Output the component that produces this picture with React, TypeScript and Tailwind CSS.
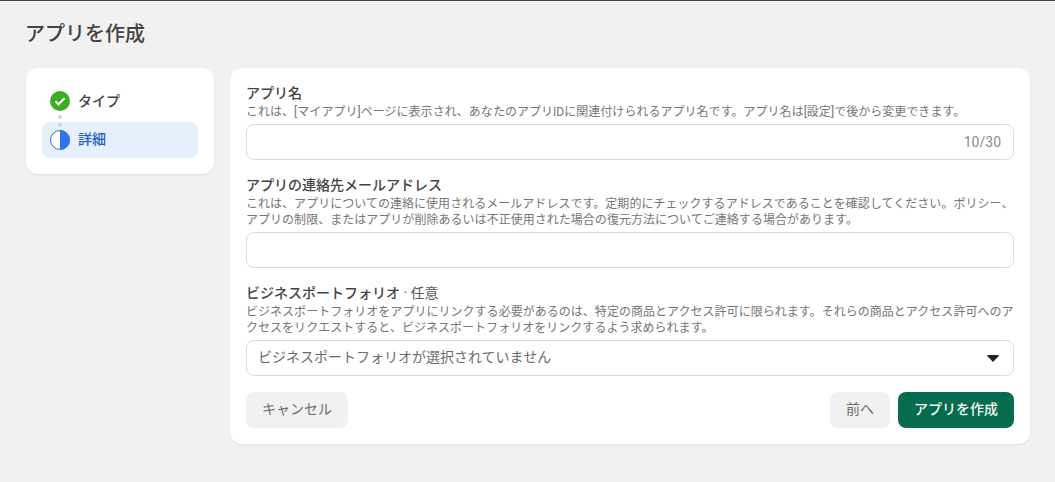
const font = "font-['Roboto','Noto_Sans_CJK_JP',sans-serif]";

const Field = ({
  label,
  optional,
  lines,
  children,
}: {
  label: string;
  optional?: string;
  lines: string[];
  children: React.ReactNode;
}) => {
  return (
    <div className="flex flex-col">
      <div className="h-4 text-sm leading-[18px] font-medium text-[#444] whitespace-pre">
        {label}
        {optional && <span className="font-normal text-[#5a5a5a]">{optional}</span>}
      </div>
      <div className="my-1 text-xs leading-4 tracking-[0.03px] text-[#757575]">
        {lines.map((line) => (
          <div key={line} className="whitespace-nowrap">
            {line}
          </div>
        ))}
      </div>
      {children}
    </div>
  );
};

const StepCheck = () => (
  <svg width="20" height="20" viewBox="0 0 20 20">
    <circle cx="10" cy="10" r="10" fill="#3cae22" />
    <path d="M5.5 10.2l3 3 6-6" fill="none" stroke="#fff" strokeWidth="2.2" />
  </svg>
);

const StepHalf = () => (
  <svg width="20" height="20" viewBox="0 0 20 20">
    <circle cx="10" cy="10" r="9.5" fill="#fff" stroke="#3f6fd0" />
    <path d="M10 0a10 10 0 0 1 0 20z" fill="#2f74e8" />
  </svg>
);

export default function App() {
  return (
    <div className={`${font} w-[1055px] h-[482px] bg-[#f1f1f1] border-t border-[#444] overflow-hidden`}>
      <h1 className="pl-[25px] pt-[19px] text-xl leading-7 font-medium text-[#444]">アプリを作成</h1>
      <div className="flex items-start gap-4 pl-[26px] mt-[20px]">
        <aside className="w-[188px] h-[106px] bg-white rounded-xl shadow-[0_1px_2px_rgba(0,0,0,0.08)] px-4 pt-[15px]">
          <div className="relative flex flex-col gap-[3px]">
            <div className="flex items-center gap-2 h-9 pl-2 text-sm font-medium text-[#444]">
              <StepCheck />
              タイプ
            </div>
            <div className="flex items-center gap-2 h-9 pl-2 rounded-lg bg-[#e6f0fc] text-sm font-medium text-[#1d5fc4]">
              <StepHalf />
              <span className="mb-[2px]">詳細</span>
            </div>
            <div className="absolute left-[16px] top-[32px] w-[4px] h-[4px] rounded-full bg-[#d4d4d4]" />
            <div className="absolute left-[16px] top-[40px] w-[4px] h-[4px] rounded-full bg-[#d4d4d4]" />
          </div>
        </aside>
        <main className="w-[800px] h-[376px] bg-white rounded-xl shadow-[0_1px_2px_rgba(0,0,0,0.08)] px-4 pt-4 flex flex-col">
          <div className="flex flex-col gap-4">
            <Field
              label="アプリ名"
              lines={["これは、[マイアプリ]ページに表示され、あなたのアプリIDに関連付けられるアプリ名です。アプリ名は[設定]で後から変更できます。"]}
            >
              <div className="h-9 border border-[#dcdcdc] rounded-lg flex items-center justify-end pr-3 text-sm text-[#8a8a8a]">
                10/30
              </div>
            </Field>
            <Field
              label="アプリの連絡先メールアドレス"
              lines={[
                "これは、アプリについての連絡に使用されるメールアドレスです。定期的にチェックするアドレスであることを確認してください。ポリシー、",
                "アプリの制限、またはアプリが削除あるいは不正使用された場合の復元方法についてご連絡する場合があります。",
              ]}
            >
              <div className="h-9 border border-[#dcdcdc] rounded-lg" />
            </Field>
            <Field
              label="ビジネスポートフォリオ"
              optional=" · 任意"
              lines={[
                "ビジネスポートフォリオをアプリにリンクする必要があるのは、特定の商品とアクセス許可に限られます。それらの商品とアクセス許可へのア",
                "クセスをリクエストすると、ビジネスポートフォリオをリンクするよう求められます。",
              ]}
            >
              <div className="h-9 border border-[#dcdcdc] rounded-lg flex items-center justify-between pl-[11px] pr-[14px] text-sm text-[#6b6b6b]">
                <span className="mb-[2px]">ビジネスポートフォリオが選択されていません</span>
                <svg width="12" height="7" viewBox="0 0 12 7">
                  <path d="M0.5 0h11v1.2L6 7 0.5 1.2z" fill="#222" />
                </svg>
              </div>
            </Field>
          </div>
          <div className="flex justify-between mt-4">
            <button className="h-9 px-4 pb-[2px] rounded-lg bg-[#f1f1f1] text-sm text-[#6b6b6b]">キャンセル</button>
            <div className="flex gap-2">
              <button className="h-9 px-4 pb-[2px] rounded-lg bg-[#f1f1f1] text-sm text-[#6b6b6b]">前へ</button>
              <button className="h-9 px-4 pb-[2px] rounded-lg bg-[#076b4f] text-sm font-medium text-[#f2f7f5]">アプリを作成</button>
            </div>
          </div>
        </main>
      </div>
    </div>
  );
}
